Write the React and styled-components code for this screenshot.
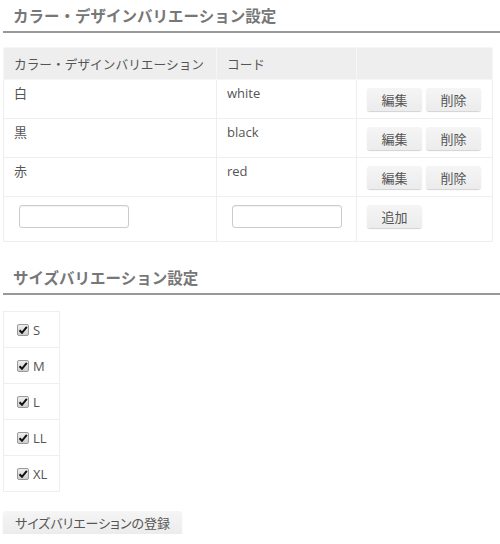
import React from "react";
import styled, { createGlobalStyle } from "styled-components";

const GlobalStyle = createGlobalStyle`
  html, body {
    margin: 0;
    padding: 0;
    background: #fff;
  }
  body {
    font-family: "Open Sans", "Noto Sans CJK JP", sans-serif;
    font-size: 13px;
    color: #555;
  }
`;

const Page = styled.div`
  width: 497px;
  padding: 0 0 0 3px;
`;

const Heading = styled.h2`
  margin: ${(p) => (p.$first ? "0" : "20px")} 0 0;
  padding: 5px 10px 4px;
  font-size: 15.5px;
  font-weight: bold;
  line-height: 22px;
  color: #777;
  border-bottom: 2px solid #999;
  white-space: nowrap;
`;

const Table = styled.table`
  margin-top: 14px;
  width: 490px;
  border-collapse: collapse;
  table-layout: fixed;
  border: 1px solid #eee;

  & th, & td {
    border: 1px solid #eee;
    text-align: left;
    vertical-align: top;
    white-space: nowrap;
  }
  & th {
    background: #eee;
    font-weight: normal;
    font-size: 12.7px;
    height: 31px;
    padding: 0 8px 0 10px;
    vertical-align: middle;
    border-color: #f6f6f6;
  }
  & td {
    padding: 5px 10px 10px;
    height: 23px;
    line-height: 16px;
  }
`;

const ActionCell = styled.td`
  && {
    padding: 8px 4px 7px 10px;
  }
`;

const InputCell = styled.td`
  && {
    padding: 8px 10px 13px 15px;
  }
`;

const TextBox = styled.input`
  display: block;
  box-sizing: border-box;
  width: 110px;
  height: 23px;
  border: 1px solid #ccc;
  border-radius: 3px;
  background: #fff;
  box-shadow: inset 0 1px 1px rgba(0, 0, 0, 0.05);
`;

const Button = styled.button`
  box-sizing: border-box;
  height: 23px;
  width: ${(p) => p.$width || "55px"};
  margin-right: 4px;
  padding: 0 6px;
  border: none;
  border-radius: 3px;
  background: linear-gradient(#f5f5f5, #ececec);
  box-shadow: 0 1px 1px rgba(0, 0, 0, 0.18);
  font-family: "Open Sans", "Noto Sans CJK JP", sans-serif;
  font-size: 13px;
  font-feature-settings: ${(p) => (p.$narrow ? '"palt"' : "normal")};
  color: #555;
  white-space: nowrap;
  vertical-align: top;
  cursor: pointer;
`;

const SizeTable = styled.table`
  margin-top: 16px;
  border-collapse: collapse;
  border: 1px solid #eee;

  & td {
    border: 1px solid #eee;
    width: 56px;
    height: 36px;
    padding: 0 0 0 13px;
    box-sizing: border-box;
  }
`;

const SizeLabel = styled.label`
  display: flex;
  align-items: center;
  gap: 4px;
  line-height: 16px;
`;

const CheckBox = styled.span`
  display: inline-flex;
  align-items: center;
  justify-content: center;
  box-sizing: border-box;
  width: 12px;
  height: 12px;
  border: 1px solid #999;
  border-radius: 2px;
  background: linear-gradient(#eee, #cfcfcf);
`;

const Footer = styled.div`
  margin-top: 19px;
`;

const colors = [
  { name: "白", code: "white" },
  { name: "黒", code: "black" },
  { name: "赤", code: "red" },
];

const sizes = ["S", "M", "L", "LL", "XL"];

const Checked = () => (
  <CheckBox>
    <svg width="10" height="10" viewBox="0 0 10 10">
      <path d="M1.5 5.2 L4 7.8 L8.8 1.8" fill="none" stroke="#111" strokeWidth="2" />
    </svg>
  </CheckBox>
);

export default function App() {
  return (
    <Page>
      <GlobalStyle />
      <Heading $first>カラー・デザインバリエーション設定</Heading>
      <Table>
        <colgroup>
          <col style={{ width: 213 }} />
          <col style={{ width: 140 }} />
          <col />
        </colgroup>
        <thead>
          <tr>
            <th>カラー・デザインバリエーション</th>
            <th>コード</th>
            <th></th>
          </tr>
        </thead>
        <tbody>
          {colors.map((c) => (
            <tr key={c.code}>
              <td>{c.name}</td>
              <td>{c.code}</td>
              <ActionCell>
                <Button>編集</Button>
                <Button>削除</Button>
              </ActionCell>
            </tr>
          ))}
          <tr>
            <InputCell>
              <TextBox type="text" />
            </InputCell>
            <InputCell>
              <TextBox type="text" />
            </InputCell>
            <ActionCell>
              <Button>追加</Button>
            </ActionCell>
          </tr>
        </tbody>
      </Table>

      <Heading>サイズバリエーション設定</Heading>
      <SizeTable>
        <tbody>
          {sizes.map((s) => (
            <tr key={s}>
              <td>
                <SizeLabel>
                  <Checked />
                  {s}
                </SizeLabel>
              </td>
            </tr>
          ))}
        </tbody>
      </SizeTable>

      <Footer>
        <Button $width="179px" $narrow>サイズバリエーションの登録</Button>
      </Footer>
    </Page>
  );
}
